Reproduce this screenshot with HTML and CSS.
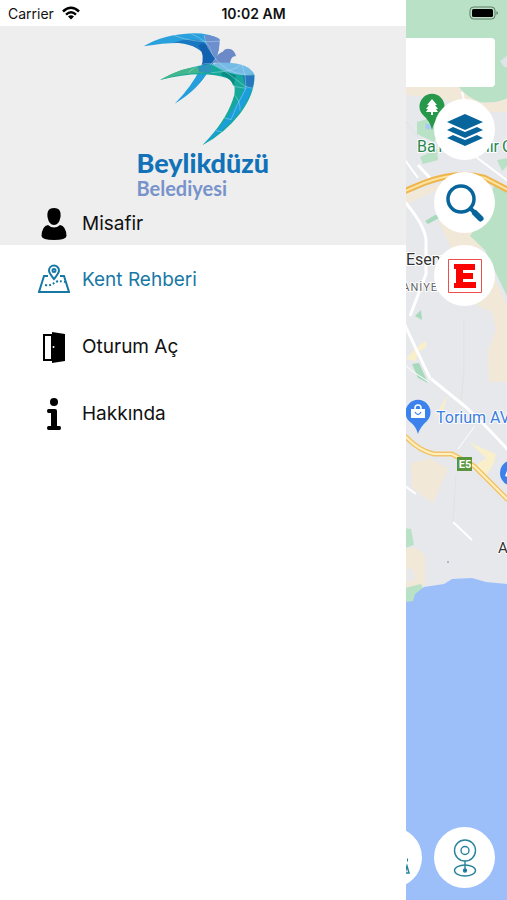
FILE: index.html
```html
<!DOCTYPE html>
<html lang="tr">
<head>
<meta charset="utf-8">
<meta name="viewport" content="width=device-width, initial-scale=1">
<title>Beylikdüzü Belediyesi</title>
<link rel="stylesheet" href="styles.css">
</head>
<body>
<div class="screen">
  <header class="status">
    <span class="carrier">Carrier
      <svg class="wifi" viewBox="0 0 20 14" aria-hidden="true">
        <path d="M2 5.500Q10-2 18 5.500" stroke-width="2.600"/>
        <path d="M5 8.600Q10 4 15 8.600" stroke-width="2.400"/>
        <path class="solid" d="M7 10.500Q10 8 13 10.500L10 13.600Z"/>
      </svg>
    </span>
    <time class="clock">10:02 AM</time>
    <svg class="battery" viewBox="0 0 30 16" aria-hidden="true">
      <rect x="1" y="2" width="25" height="12" rx="3.500" fill="none" stroke="#5f7a66"/>
      <rect x="3" y="4" width="21" height="8" rx="1.500"/>
      <path d="M27.500 6q3 2 0 4z" fill="#5f7a66"/>
    </svg>
  </header>

  <aside class="drawer">
    <div class="profile">
      <div class="brand">
        <svg class="bird" viewBox="39 15 360 360" aria-hidden="true">
          <path fill="#2aa0dc" d="M41 64Q100 28 190 25Q240 25 268 42L264 78L222 68Q170 42 41 64Z"/>
          <path fill="#1a78c2" d="M130 53Q180 35 222 50L250 72L225 92Q200 55 130 53Z"/>
          <path fill="#1262b0" d="M215 55L266 74Q258 106 238 132Q218 170 186 195L212 130Q228 92 205 62Z"/>
          <path fill="#239fdc" d="M212 128L240 130Q205 195 134 236Q185 185 212 128Z"/>
          <path fill="#6d8fcd" d="M222 30Q258 32 269 43Q270 72 258 100Q232 70 222 30Z"/>
          <path fill="#6c89c8" d="M248 113Q262 84 278 80Q285 68 303 73Q314 77 318 94Q304 90 300 114Z"/>
          <path fill="#16a99b" d="M90 165Q155 127 235 118Q345 108 373 150Q376 205 330 266Q284 325 218 360Q286 290 308 225Q326 177 292 160Q215 133 90 165Z"/>
          <path fill="#43b68b" d="M90 165Q150 130 205 126L222 143Q160 143 90 165Z"/>
          <path fill="#2e93bd" d="M205 124L242 118L244 143L207 142Z"/>
          <path fill="#74bbe6" d="M244 116Q350 103 373 148Q324 155 286 138Q265 128 244 116Z"/>
          <path fill="#088d85" d="M280 139L318 151L310 184Q305 160 272 149Z"/>
          <path fill="#1b9edb" d="M344 186L368 185Q342 275 218 360Q315 265 344 186Z"/>
          <path fill="#2578bd" d="M338 151L373 149Q374 172 367 190L346 183Z"/>
          <path fill="none" stroke="#c5e7ef" stroke-opacity=".6" stroke-width="2" d="M132 31Q190 55 268 49M183 26Q235 48 243 78T300 137Q345 155 373 149M222 30Q229 72 258 100L240 120M175 143Q205 112 244 116Q295 142 345 184L370 190M244 143Q320 139 335 116Q349 152 348 190M310 184L348 190Q319 240 303 284L278 277M312 208Q332 230 330 256M258 317L276 321"/>
        </svg>
        <div class="wordmark"><strong>Beylikdüzü</strong><span>Belediyesi</span></div>
      </div>
      <div class="item user">
        <svg class="icon" viewBox="0 0 32 32" aria-hidden="true">
          <path d="M16 0C10 0 9 4 9.500 9Q11 17 16 17T22.500 9C23 4 22 0 16 0Z"/>
          <path d="M10 17Q16 22 22 17Q28 18 28.500 28Q28 32 16 32T3.500 28Q4 18 10 17Z"/>
        </svg>
        <span>Misafir</span>
      </div>
    </div>
    <nav class="menu">
      <a class="item active" href="#rehber" aria-current="page">
        <svg class="icon" viewBox="0 0 32 32" aria-hidden="true">
          <g fill="none" stroke="#1878a5" stroke-width="2">
            <path d="M10 12H6L1 28H31L26 12H22"/>
            <path d="M16 15Q11 9 11 6.500A5 5 0 0 1 21 6.500Q21 9 16 15Z"/>
            <circle cx="16" cy="6.500" r="1.500"/>
            <path d="M7 21Q13 22 16 19T27 18" stroke-dasharray="2 2"/>
          </g>
        </svg>
        <span>Kent Rehberi</span>
      </a>
      <a class="item" href="#oturum">
        <svg class="icon" viewBox="0 0 32 32" aria-hidden="true">
          <path d="M5 3H14V1L27 3V30L14 32V30H5ZM7 5V28H13V5Z" fill-rule="evenodd"/>
          <circle cx="15.500" cy="16" r="1" fill="#fff"/>
        </svg>
        <span>Oturum Aç</span>
      </a>
      <a class="item" href="#hakkinda">
        <svg class="icon" viewBox="0 0 32 32" aria-hidden="true">
          <circle cx="16" cy="4" r="4"/>
          <path d="M10.500 11H17Q19 11 19 13V28H21.500Q23 28 23 30T21.500 32H10.500Q9 32 9 30T10.500 28H13V15H10.500Q9 15 9 13T10.500 11Z"/>
        </svg>
        <span>Hakkında</span>
      </a>
    </nav>
  </aside>

  <main class="map">
    <svg class="tiles" viewBox="406 0 102 900" preserveAspectRatio="xMinYMin slice" aria-hidden="true">
      <path fill="#e6e8ec" d="M405 0H508V900H405Z"/>
      <path fill="#b9e1c5" d="M405 0H508V98Q498 104 480 102Q466 97 458 86H405Z"/>
      <path fill="#dce5e7" d="M508 55L500 61L504 67H508Z"/>
      <path fill="#f2e8d8" d="M405 86H458Q466 98 482 103Q498 103 508 98V112L480 112L440 98L405 95Z"/>
      <path fill="#b9e1c5" d="M417 122L427 119L440 132L434 142L417 134Z"/>
      <path fill="#b9e1c5" d="M420 157L437 149L438 160L423 164ZM497 160L508 158V165L502 171Z"/>
      <path fill="#a9c9f5" d="M426 123L432 126L429 130L425 128Z"/>
      <path fill="#f2e8d8" d="M405 194L440 183L437 190L405 205ZM437 216L472 230L488 262L500 290L508 310V382H489V350L496 330L492 312L478 306L445 235Z"/>
      <path fill="#b9e1c5" d="M494 186L508 193V298Q496 274 485 250L470 236L484 215Z"/>
      <path fill="#a9d9bd" d="M425 221L435 215L443 216L428 224ZM415 316L421 310L422 320ZM412 364L419 363L428 383L418 378Z"/>
      <path fill="#f2e8d8" d="M488 350L508 346V382H489ZM411 463L430 458L448 469L433 503L412 488Z"/>
      <path fill="#f9efcb" d="M421 344L427 341L426 347L418 352L416 361L406 359L412 352ZM448 395L443 410L434 418L444 401ZM469 442L484 449L496 454L494 463L486 476L475 466L486 458Z"/>
      <path fill="#b9e1c5" d="M405 528L411 529L414 545L405 548Z"/>
      <path fill="#f2e8d8" d="M405 548H416L425 555L425 584L405 592Z"/>
      <path fill="#e6e8ec" d="M407 568L413 570L415 579L407 583Z"/>
      <path fill="#b9e1c5" d="M405 588L421 584L424 591L413 602H405Z"/>
      <path fill="#9dbff9" d="M405 602L413 601L415 594L424 587L444 584L452 579L472 578L486 582L508 584V900H405Z"/>
      <g fill="none" stroke="#fff" stroke-width="2">
        <path d="M418 165L430 178M405 202Q425 226 426 240V274L410 316M405 325Q414 345 430 378L467 408Q491 431 508 450" stroke-width="3"/>
        <path d="M453 522L472 540M405 486L416 494M462 92L468 116M472 154L508 181M405 160L418 178"/>
        <path d="M405 365L412 371L429 382M475 426L458 449" stroke-width="1"/>
      </g>
      <g fill="none" stroke="#dfe1e5">
        <path d="M464 320V370L461 400M453 522L456 475M405 120L420 140"/>
      </g>
      <path fill="none" stroke="#efb54a" stroke-width="6" d="M405 191L424 183Q458 170 485 178L508 190"/>
      <path fill="none" stroke="#fbe3a2" stroke-width="2" d="M405 191L424 183Q458 170 485 178L508 190"/>
      <path fill="none" stroke="#f2c36a" stroke-width="5" d="M405 436Q419 451 434 454H452L474 466L508 500"/>
      <path fill="none" stroke="#fff0bd" stroke-width="2" d="M405 436Q419 451 434 454H452L474 466L508 500"/>
      <circle cx="448" cy="562" r="1" fill="#95a8cc"/>
      <path fill="#279849" d="M432 130Q430 121 423 115A12.500 12.500 0 1 1 441 115Q434 121 432 130Z"/>
      <path fill="#fff" d="M432 99L437 105H435L438 109H436L438 112H433V115H431V112H426L428 109H426L429 105H427Z"/>
      <path fill="#3c82ed" d="M418 434Q416 426 409 421A12.500 12.500 0 1 1 427 421Q420 427 418 434Z"/>
      <path fill="#fff" d="M411 409H425V418H411Z"/>
      <path fill="none" stroke="#fff" stroke-width="1.500" d="M415 410V408Q415 405 418 405T421 408V410"/>
      <path fill="none" stroke="#3c82ed" stroke-width="1.300" d="M415 412Q418 417 421 412"/>
      <circle cx="513" cy="473" r="13" fill="#3c82ed"/>
      <path d="M505 476L508 468V477Z" fill="#fff"/>
      <path fill="#5b963f" d="M457 457H472V471H457Z"/>
      <g class="labels">
        <text class="park" x="417" y="152">Ba</text>
        <text class="park" x="499" y="152" text-anchor="end">hçeşehir</text>
        <text class="park" x="502" y="152">G</text>
        <text class="town" x="406" y="265">Esenyurt</text>
        <text class="district" x="438" y="291" text-anchor="end">OSMANİYE</text>
        <text class="shop" x="436" y="423">Torium AVM</text>
        <text class="road" x="465" y="468" text-anchor="middle">E5</text>
        <text class="town small" x="498" y="553">Ambarlı</text>
      </g>
    </svg>

    <div class="controls">
      <input class="search" type="search" aria-label="Ara">
      <button class="round" type="button" aria-label="Katmanlar">
        <svg viewBox="0 0 40 40" aria-hidden="true" fill="#08659b">
          <path d="M20 4L38 12L20 20L2 12Z"/>
          <path d="M2 20L8 17L20 22L32 17L38 20L20 28Z"/>
          <path d="M2 28L8 25L20 30L32 25L38 28L20 36Z"/>
        </svg>
      </button>
      <button class="round" type="button" aria-label="Bul">
        <svg viewBox="0 0 40 40" aria-hidden="true" fill="none" stroke="#08659b">
          <circle cx="16" cy="16" r="13" stroke-width="3.500"/>
          <path d="M25 25L29 29" stroke-width="4"/>
          <path d="M30 30L35.500 35.500" stroke-width="6" stroke-linecap="round"/>
        </svg>
      </button>
      <button class="round" type="button" aria-label="Eczaneler">
        <svg viewBox="0 0 40 40" aria-hidden="true">
          <path fill="#fff" stroke="#f04d4d" d="M3.500 3.500H36.500V36.500H3.500Z"/>
          <path fill="#f00" d="M9 8H30V14H18V17H28V23H18V26H31V32H9V27H11V13H9Z"/>
        </svg>
      </button>
      <div class="bottom">
        <button class="round" type="button" aria-label="Konum">
          <svg viewBox="0 0 40 40" aria-hidden="true" fill="none" stroke="#28829c">
            <path d="M5 22H36" stroke-width="3" stroke-dasharray="3 2"/>
            <path d="M5 35L10 29M33 35L35 28L37 35Z" stroke-width="1.500"/>
          </svg>
        </button>
        <button class="round" type="button" aria-label="Panorama">
          <svg viewBox="0 0 40 40" aria-hidden="true" fill="none" stroke="#28829c" stroke-width="1.400">
            <circle cx="20" cy="12.500" r="10.500"/>
            <circle cx="20" cy="12.500" r="4"/>
            <path d="M20 23V32"/>
            <ellipse cx="20" cy="32.500" rx="10.500" ry="5.500"/>
            <circle cx="20" cy="32.500" r="1.500" fill="#08659b"/>
          </svg>
        </button>
      </div>
    </div>
  </main>
</div>
</body>
</html>
```
FILE: styles.css
```css
* { box-sizing: border-box; }

body {
  margin: 0;
  font-family: Inter, "Liberation Sans", sans-serif;
  color: #111;
}

.screen {
  position: relative;
  display: grid;
  grid-template-columns: 4fr 1fr;
  min-height: 100vh;
}

.status {
  position: absolute;
  inset: 0 0 auto;
  z-index: 2;
  display: grid;
  grid-template-columns: 1fr auto 1fr;
  align-items: center;
  height: 26px;
  padding: 0 8px;
  font-size: 14px;
}

.carrier { display: flex; align-items: center; gap: 7px; }
.wifi { width: 20px; height: 14px; fill: none; stroke: #000; }
.wifi .solid { fill: #000; stroke: none; }
.clock { font-weight: 600; }
.battery { justify-self: end; width: 30px; height: 16px; }

.drawer {
  z-index: 1;
  padding-top: 26px;
  background: #fff;
}

.profile {
  display: flex;
  flex-direction: column;
  background: #eee;
}

.brand {
  display: flex;
  flex-direction: column;
  align-items: center;
  padding-top: 4px;
}

.bird { width: 120px; height: 120px; }

.wordmark {
  display: flex;
  flex-direction: column;
  font-family: Lato, sans-serif;
}

.wordmark strong {
  font-size: 27px;
  line-height: 26px;
  font-weight: 900;
  color: #1272b8;
}

.wordmark span {
  font-size: 20px;
  line-height: 24px;
  font-weight: 700;
  color: #7893cb;
}

.item {
  display: flex;
  align-items: center;
  gap: 12px;
  height: 67px;
  padding-top: 2px;
  padding-left: 38px;
  font-size: 19px;
  color: inherit;
  text-decoration: none;
}

.item.user { height: 45px; }
.item.active { color: #1878a5; }
.icon { width: 32px; height: 32px; }

.map {
  position: relative;
  display: flex;
  min-width: 0;
  overflow: hidden;
}

.tiles {
  position: absolute;
  inset: 0;
  width: 100%;
  height: 100%;
}

.labels {
  font-family: Roboto, sans-serif;
  paint-order: stroke;
  stroke: #fff;
  stroke-width: 2px;
  stroke-linejoin: round;
}

.park { font-size: 16px; fill: #278650; }
.town { font-size: 16px; fill: #333; }
.small { font-size: 15px; }
.district { font-size: 11px; letter-spacing: 1px; fill: #666; }
.shop { font-size: 16px; fill: #3a7de0; }
.road { font-size: 11px; font-weight: 700; fill: #fff; stroke: none; }

.controls {
  position: relative;
  display: flex;
  flex: 1;
  flex-direction: column;
  align-items: flex-end;
  gap: 12px;
  min-width: 0;
  padding: 38px 12px 12px 0;
}

.search {
  width: 100%;
  height: 49px;
  border: 0;
  border-radius: 0 4px 4px 0;
  background: #fff;
}

.round {
  display: grid;
  flex: none;
  place-items: center;
  width: 61px;
  height: 61px;
  padding: 0;
  border: 0;
  border-radius: 50%;
  background: #fff;
}

.round svg { width: 40px; height: 40px; }

.bottom {
  display: flex;
  justify-content: flex-end;
  gap: 12px;
  width: 100%;
  margin-top: auto;
}
```
